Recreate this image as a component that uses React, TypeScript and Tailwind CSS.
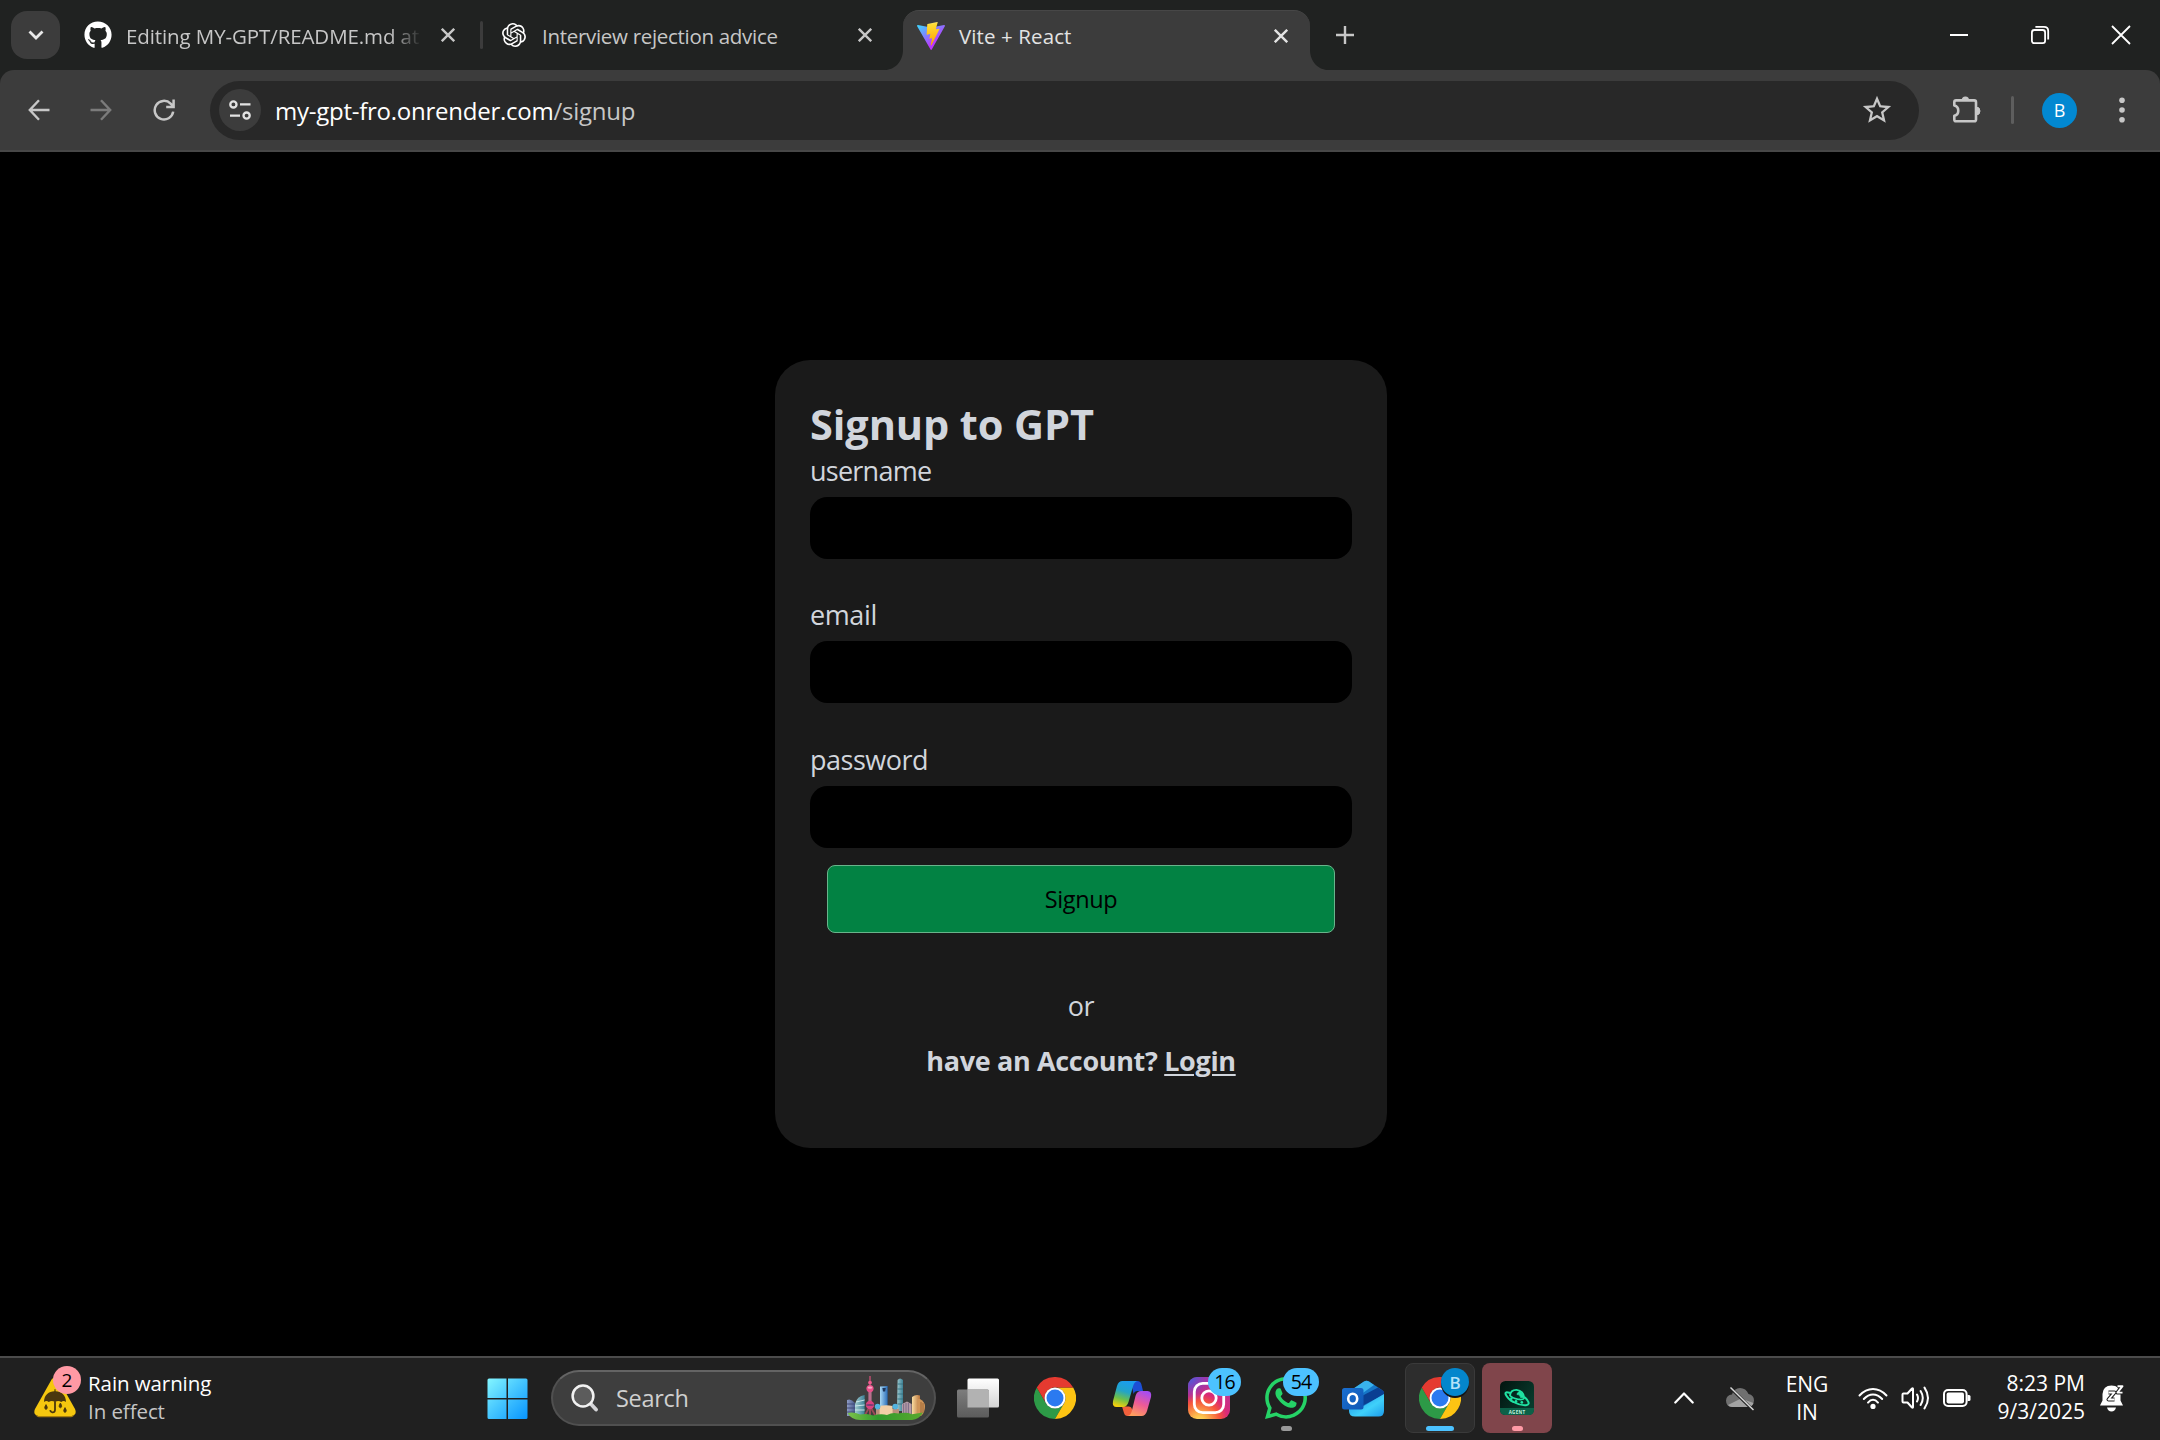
import type { ReactNode } from "react";
import { FaGithub, FaWhatsapp } from "react-icons/fa";
import { SiOpenai } from "react-icons/si";
import { MdStarBorder } from "react-icons/md";

/* ---------- shared glyphs ---------- */

function Close({ className }: { className: string }) {
  return (
    <svg width="14" height="14" viewBox="0 0 14 14" className={className} fill="none" stroke="currentColor" strokeWidth="2.4">
      <path d="M0.8 0.8 L13.2 13.2 M13.2 0.8 L0.8 13.2" />
    </svg>
  );
}

function ViteLogo() {
  return (
    <svg width="28" height="28" viewBox="0 0 256 257" className="shrink-0">
      <defs>
        <linearGradient id="viteA" x1="-.828%" x2="57.636%" y1="7.652%" y2="78.411%">
          <stop offset="0%" stopColor="#41D1FF" />
          <stop offset="100%" stopColor="#BD34FE" />
        </linearGradient>
        <linearGradient id="viteB" x1="43.376%" x2="50.316%" y1="2.242%" y2="89.03%">
          <stop offset="0%" stopColor="#FFEA83" />
          <stop offset="8.333%" stopColor="#FFDD35" />
          <stop offset="100%" stopColor="#FFA800" />
        </linearGradient>
      </defs>
      <path fill="url(#viteA)" d="M255.153 37.938L134.897 252.976c-2.483 4.44-8.862 4.466-11.382.048L.875 37.958c-2.746-4.814 1.371-10.646 6.827-9.67l120.385 21.517a6.537 6.537 0 0 0 2.322-.004l117.867-21.483c5.438-.991 9.574 4.796 6.877 9.62Z" />
      <path fill="url(#viteB)" d="M185.432.063L96.44 17.501a3.268 3.268 0 0 0-2.634 3.014l-5.474 92.456a3.268 3.268 0 0 0 3.997 3.378l24.777-5.718c2.318-.535 4.413 1.507 3.936 3.838l-7.361 36.047c-.495 2.426 1.782 4.5 4.151 3.78l15.304-4.649c2.372-.72 4.652 1.36 4.15 3.788l-11.698 56.621c-.732 3.542 3.979 5.473 5.943 2.437l1.313-2.028l72.516-144.72c1.215-2.423-.88-5.186-3.54-4.672l-25.505 4.922c-2.396.462-4.435-1.77-3.759-4.114l16.646-57.705c.677-2.35-1.37-4.583-3.769-4.113Z" />
    </svg>
  );
}

function ChromeLogo() {
  return (
    <svg width="42" height="42" viewBox="0 0 48 48">
      <path fill="#2d9a47" d="M3.21 12A24 24 0 0 0 24 48L34.39 30A12 12 0 0 1 13.61 30Z" />
      <path fill="#fdc413" d="M24 48A24 24 0 0 0 44.79 12L24 12A12 12 0 0 1 34.39 30Z" />
      <path fill="#e53a30" d="M44.79 12A24 24 0 0 0 3.21 12L13.61 30A12 12 0 0 1 24 12Z" />
      <circle cx="24" cy="24" r="12" fill="#fff" />
      <circle cx="24" cy="24" r="9.7" fill="#2b7af0" />
    </svg>
  );
}

/* ---------- browser chrome ---------- */

function TabFlare({ side }: { side: "left" | "right" }) {
  return (
    <svg
      width="18"
      height="20"
      viewBox="0 0 18 20"
      className={side === "left" ? "absolute bottom-0 -left-[18px]" : "absolute bottom-0 -right-[18px] -scale-x-100"}
    >
      <path d="M18 0V20H0C10 20 18 11 18 0Z" fill="#3c3c3c" />
    </svg>
  );
}

function TabStrip() {
  return (
    <div className="flex h-[70px] items-center bg-[#202221] pl-[11px] text-[20.5px] leading-[28px] text-[#c7c7c7]">
      <div className="flex h-[48px] w-[49px] items-center justify-center rounded-[16px] bg-[#3c3c3c]">
        <svg width="16" height="10" viewBox="0 0 16 10" fill="none" stroke="#e8e8e8" strokeWidth="2.8">
          <path d="M1.5 1.5 L8 8 L14.5 1.5" />
        </svg>
      </div>

      <div className="ml-[6px] flex w-[414px] items-center pl-[18px]">
        <FaGithub className="h-[28px] w-[28px] shrink-0 text-white" />
        <span className="ml-[14px] w-[293px] whitespace-nowrap pt-[1px] tracking-[-0.1px] [mask-image:linear-gradient(to_right,black_90%,transparent_101%)]">
          Editing MY-GPT/README.md at
        </span>
        <Close className="ml-[22px] shrink-0" />
      </div>

      <div className="h-[28px] w-[3px] rounded-full bg-[#3c3c3c]" />

      <div className="flex w-[420px] items-center pl-[19px]">
        <SiOpenai className="h-[24px] w-[24px] shrink-0 text-white" />
        <span className="ml-[16px] w-[301px] whitespace-nowrap pt-[1px] tracking-[-0.3px]">Interview rejection advice</span>
        <Close className="ml-[15px] shrink-0" />
      </div>

      <div className="relative flex h-[60px] w-[407px] items-center self-end rounded-t-[16px] border-t border-[#474747] bg-[#3c3c3c] pb-[10px] pl-[14px] text-[#e3e3e3]">
        <TabFlare side="left" />
        <ViteLogo />
        <span className="ml-[14px] w-[301px] whitespace-nowrap pt-[1px] tracking-[0.1px]">Vite + React</span>
        <Close className="ml-[14px] shrink-0" />
        <TabFlare side="right" />
      </div>

      <svg width="18" height="18" viewBox="0 0 18 18" className="ml-[26px]" stroke="#c7c7c7" strokeWidth="2.4">
        <path d="M9 0V18M0 9H18" />
      </svg>

      <div className="ml-auto flex items-center gap-[61px] pr-[29px] text-white">
        <svg width="20" height="20" viewBox="0 0 20 20" stroke="currentColor" strokeWidth="2">
          <path d="M1 10H19" />
        </svg>
        <svg width="20" height="20" viewBox="0 0 20 20" fill="none" stroke="currentColor" strokeWidth="1.8">
          <rect x="1.9" y="5" width="13.2" height="13.2" rx="2.4" />
          <path d="M5.4 1.9H14Q18.2 1.9 18.2 6V14.4" />
        </svg>
        <svg width="20" height="20" viewBox="0 0 20 20" stroke="currentColor" strokeWidth="1.8">
          <path d="M1 1L19 19M19 1L1 19" />
        </svg>
      </div>
    </div>
  );
}

function Toolbar() {
  return (
    <div className="bg-[#202221]">
      <div className="flex h-[82px] items-center rounded-t-[14px] border-b-2 border-[#474747] bg-[#3c3c3c] pl-[28px] text-[#c7c7c7]">
        <svg width="22" height="22" viewBox="0 0 22 22" fill="none" stroke="currentColor" strokeWidth="2.4">
          <path d="M21.5 11H2M11 1.2L1.8 11L11 20.8" />
        </svg>
        <svg width="22" height="22" viewBox="0 0 22 22" className="ml-[40px] text-[#7b7b7b]" fill="none" stroke="currentColor" strokeWidth="2.4">
          <path d="M0.5 11H20M11 1.2L20.2 11L11 20.8" />
        </svg>
        <svg width="22" height="22" viewBox="0 0 22 22" className="ml-[41px]" fill="none" stroke="currentColor" strokeWidth="2.5">
          <path d="M20.2 12.6A9.3 9.3 0 1 1 17.6 4.6L20.4 7.4M20.6 0.6V8H13.2" />
        </svg>

        <div className="ml-[35px] flex h-[59px] w-[1709px] items-center rounded-full bg-[#282828] pl-[9px]">
          <div className="flex h-[42px] w-[42px] items-center justify-center rounded-full bg-[#3c3c3c]">
            <svg width="22" height="20" viewBox="0 0 22 20" fill="none" stroke="#e3e3e3" strokeWidth="2.3">
              <circle cx="4.4" cy="4.4" r="3.1" />
              <path d="M11 4.4H21.5M1 15.6H11" />
              <circle cx="17.6" cy="15.6" r="3.1" />
            </svg>
          </div>
          <span className="ml-[14px] whitespace-nowrap pt-[2px] text-[24px] leading-[34px] tracking-[-0.25px] text-white">
            my-gpt-fro.onrender.com<span className="text-[#c7c7c7]">/signup</span>
          </span>
          <MdStarBorder className="ml-auto mr-[25px] h-[34px] w-[34px]" />
        </div>

        <svg width="32" height="32" viewBox="0 0 32 32" className="ml-[31px] -mt-[2px]" fill="none" stroke="currentColor" strokeWidth="2.6" strokeLinejoin="round">
          <path d="M6 7.4H24.2Q26 7.4 26 9.2V26.4Q26 28.2 24.2 28.2H6Q4.3 28.2 4.3 26.4V22.8C9.600 21.5 9.600 13.8 4.3 12.6V9.2Q4.3 7.4 6 7.4Z" />
          <path d="M11.800 7A3.6 3.6 0 0 1 19 7Z" fill="currentColor" stroke="none" />
          <path d="M26 14A4 4 0 0 1 26 22Z" fill="currentColor" strokeWidth="1" />
        </svg>
        <div className="ml-[29px] h-[28px] w-[3px] rounded-full bg-[#5e5e5e]" />
        <div className="ml-[28px] flex h-[35px] w-[35px] items-center justify-center rounded-full bg-[#0288d1] text-[18px] leading-none text-white">
          B
        </div>
        <svg width="6" height="26" viewBox="0 0 6 26" className="ml-[42px]" fill="currentColor">
          <circle cx="3" cy="3.2" r="2.8" />
          <circle cx="3" cy="13" r="2.8" />
          <circle cx="3" cy="22.8" r="2.8" />
        </svg>
      </div>
    </div>
  );
}

/* ---------- page ---------- */

function Field({ label, type, tracking }: { label: string; type: string; tracking: string }) {
  return (
    <label className="mb-[35.5px] block">
      <span className={`block text-[27px] leading-[42px] ${tracking}`}>{label}</span>
      <input type={type} className="mt-[5px] block h-[62px] w-full rounded-[17.5px] bg-black px-5 outline-none" />
    </label>
  );
}

function SignupCard() {
  return (
    <div className="h-[788px] w-[612px] rounded-[35px] bg-[#1a1a1a] px-[35px] pt-[35px] text-[#d1d5dc]">
      <h1 className="h-[54.7px] whitespace-nowrap text-[41.5px] font-bold leading-[58px] tracking-[-0.1px]">Signup to GPT</h1>
      <Field label="username" type="text" tracking="tracking-[-0.75px]" />
      <Field label="email" type="email" tracking="tracking-[-0.4px]" />
      <Field label="password" type="password" tracking="tracking-[-0.5px]" />
      <button className="mx-auto -mt-[18px] block h-[68px] w-[508px] rounded-[8px] border border-[#69b48b] bg-[#028243] text-[23.5px] leading-[34px] tracking-[-0.35px] text-black">
        Signup
      </button>
      <p className="mt-[52px] text-center text-[27px] leading-[42px] tracking-[-0.5px]">or</p>
      <p className="mt-[12.500px] text-center text-[27px] font-bold leading-[42px] tracking-[-0.34px]">
        have an Account?{" "}
        <a className="underline decoration-2 underline-offset-[3px]">Login</a>
      </p>
    </div>
  );
}

/* ---------- taskbar ---------- */

function WeatherIcon() {
  return (
    <svg width="42" height="42" viewBox="0 0 42 42">
      <path d="M17.6 3.4Q21 -1.6 24.4 3.4L41 33Q43.4 38.6 37.6 40H4.4Q-1.4 38.6 1 33Z" fill="#f5c70f" />
      <path d="M1 37.8Q2.4 40 4.6 40H37.4Q39.6 40 41 37.8Q39.6 41.2 37 41.2H5Q2.4 41.2 1 37.8Z" fill="#a97f0a" />
      <path d="M10 26C10 18.6 15 15.4 20.4 15.2V13.2H21.6V15.2C27 15.4 32 18.6 32 26Q29.6 24 27.2 26Q24.4 24 21 26Q17.6 24 14.8 26Q12.4 24 10 26Z" fill="#4a370e" />
      <path d="M21 25.4V34Q20.8 36.6 18.2 36.4Q16.4 36.2 16.2 34.2" fill="none" stroke="#4a370e" strokeWidth="1.8" />
      <path d="M12 28.6Q14.6 32.6 12 33.4Q9.4 32.6 12 28.6ZM26.4 27Q29 31 26.4 31.8Q23.8 31 26.4 27ZM31 31.6Q33.6 35.6 31 36.4Q28.4 35.6 31 31.6Z" fill="#4a370e" stroke="#4a370e" strokeWidth="0.8" />
    </svg>
  );
}

function Skyline() {
  return (
    <svg width="80" height="46" viewBox="0 0 80 46">
      <defs>
        <linearGradient id="skyBlue" x1="0" x2="1">
          <stop offset="0" stopColor="#a9d8f4" />
          <stop offset="1" stopColor="#2a6db8" />
        </linearGradient>
        <linearGradient id="skyGold" x1="0" x2="1">
          <stop offset="0" stopColor="#f9dca0" />
          <stop offset="1" stopColor="#b9743c" />
        </linearGradient>
        <linearGradient id="skyGreen" x1="0" x2="1">
          <stop offset="0" stopColor="#7dc24a" />
          <stop offset="0.4" stopColor="#2f9a2c" />
          <stop offset="1" stopColor="#5aa82f" />
        </linearGradient>
        <linearGradient id="skySteel" x1="0" x2="1">
          <stop offset="0" stopColor="#8f9cc4" />
          <stop offset="1" stopColor="#4a5a8e" />
        </linearGradient>
        <linearGradient id="skyTeal" x1="0" x2="1">
          <stop offset="0" stopColor="#9fc9cf" />
          <stop offset="1" stopColor="#3e8296" />
        </linearGradient>
      </defs>
      <path d="M1 25Q5 23 9 28V41H1Z" fill="url(#skySteel)" />
      <path d="M1 29H9M1 33H9M1 37H9" stroke="#3d4673" strokeWidth="0.9" />
      <path d="M9 41V29Q11 21 18.600 20V41Z" fill="url(#skyTeal)" />
      <path d="M10 27L18.600 25M9 31L18.600 30M9 35H18.600" stroke="#d4ecee" strokeWidth="0.9" />
      <path d="M24 1V42" stroke="#c94f74" strokeWidth="1.4" />
      <path d="M22.400 14H25.600V30H22.400Z" fill="#b9708e" />
      <path d="M22.400 34L18.400 41M25.600 34L29.600 41M24 34V41" stroke="#9b4a56" strokeWidth="1.8" />
      <circle cx="24" cy="7.600" r="1.900" fill="#ef5a8f" />
      <circle cx="24" cy="13.600" r="3.600" fill="#e8518a" />
      <ellipse cx="24" cy="12.600" rx="2.400" ry="1.200" fill="#f8a7c4" />
      <circle cx="24" cy="30" r="4.200" fill="#d9417f" />
      <ellipse cx="24" cy="30" rx="4" ry="1" fill="#7b3d75" />
      <path d="M34 11.600L41.600 11V31H34Z" fill="url(#skyBlue)" />
      <path d="M36.400 13H39.800L39.200 16.600H37Z" fill="#1c355c" />
      <path d="M51.600 5Q54 2 57 5V36H51Z" fill="url(#skyTeal)" />
      <path d="M51.400 9H57M51.400 14H57M51.400 19H57M51.400 24H57M51.400 29H57" stroke="#2f6c7c" strokeWidth="0.8" />
      <path d="M30 34H53V41H30Z" fill="#b9907a" />
      <path d="M33.600 31Q40 29.600 46.600 31V41H33.600Z" fill="#f1cfa6" />
      <circle cx="31.600" cy="31.600" r="2.800" fill="#52b3e0" />
      <circle cx="49.200" cy="31.600" r="2.800" fill="#52b3e0" />
      <path d="M56 29L61 26.600L65.600 29V41H56Z" fill="#b59ba6" />
      <path d="M57.600 29V40M60 28V40M62.400 28V40" stroke="#6f5f80" strokeWidth="0.8" />
      <path d="M66 22Q70 19 74 20.600V41H66Z" fill="url(#skyGold)" />
      <path d="M74 24Q79 27 79 31Q79 38 75 41H72V24Z" fill="#cf9558" />
      <path d="M75 27V40M77 28V38" stroke="#8f5a30" strokeWidth="0.8" />
      <path d="M1.600 38Q8 36.600 14 39.600Q22 38 27 40.600Q35 38 41 40Q47 37 52 38.600Q60 36.600 66 39.200L77 37.600Q73 44.600 66 45H14Q5 44.600 1.600 38Z" fill="url(#skyGreen)" />
    </svg>
  );
}

function Cell({ children, className = "" }: { children: ReactNode; className?: string }) {
  return <div className={`relative flex h-[70px] w-[70px] items-center justify-center ${className}`}>{children}</div>;
}

function CountBadge({ value, className }: { value: string; className: string }) {
  return (
    <span className={`absolute top-[5px] flex h-[28px] items-center justify-center rounded-full bg-[#4cc2ff] text-[19.5px] leading-none tracking-[-0.9px] text-black ${className}`}>
      {value}
    </span>
  );
}

function TaskbarApps() {
  return (
    <div className="flex items-center gap-[7px]">
      <Cell>
        <svg width="41" height="41" viewBox="0 0 41 41" className="mr-[2px]">
          <defs>
            <linearGradient id="win" x1="0" y1="0" x2="1" y2="1">
              <stop offset="0" stopColor="#84f6ff" />
              <stop offset="0.5" stopColor="#43c4ff" />
              <stop offset="1" stopColor="#0794ff" />
            </linearGradient>
          </defs>
          <path fill="url(#win)" d="M2 0.500H19.500V20H0.500V2Q0.500 0.500 2 0.500ZM21 0.500H39Q40.500 0.500 40.500 2V20H21ZM0.500 21.500H19.500V41H2Q0.500 41 0.500 39.500ZM21 21.500H40.500V39.500Q40.500 41 39 41H21Z" />
        </svg>
      </Cell>

      <div className="ml-[1px] flex h-[56px] w-[385px] items-center rounded-full border-2 border-[#505050] border-t-[#646464] bg-[#3e3e3e] pl-[18px] pr-[8px]">
        <svg width="28" height="28" viewBox="0 0 28 28" fill="none">
          <path d="M18.500 18.500L25 25.500" stroke="#d5d5d8" strokeWidth="3.800" strokeLinecap="round" />
          <circle cx="12" cy="12" r="10.400" fill="#5c5c5c" stroke="#f2f2f2" strokeWidth="2.500" />
        </svg>
        <span className="ml-[17px] text-[23.5px] leading-[34px] tracking-[-0.3px] text-[#cfcfcf]">Search</span>
        <div className="ml-auto">
          <Skyline />
        </div>
      </div>

      <Cell>
        <svg width="42" height="40" viewBox="0 0 42 40">
          <defs>
            <linearGradient id="tvA" x1="0" y1="0" x2="0" y2="1">
              <stop offset="0" stopColor="#ffffff" />
              <stop offset="1" stopColor="#d4d4d4" />
            </linearGradient>
            <linearGradient id="tvB" x1="0" y1="0" x2="0" y2="1">
              <stop offset="0" stopColor="#7d7d7d" />
              <stop offset="1" stopColor="#5c5c5c" />
            </linearGradient>
          </defs>
          <rect x="10.500" y="0.500" width="31.500" height="29" rx="1.500" fill="url(#tvA)" />
          <rect x="0" y="11.500" width="32" height="28" rx="1.500" fill="url(#tvB)" />
          <path d="M10.500 11.500H30.500Q32 11.500 32 13V29.500H10.500Z" fill="#b2b2b2" />
        </svg>
      </Cell>

      <Cell>
        <ChromeLogo />
      </Cell>

      <Cell>
        <svg width="40" height="37" viewBox="0 0 40 37">
          <defs>
            <linearGradient id="cpA" x1="0.600" y1="0" x2="0.300" y2="1">
              <stop offset="0" stopColor="#1a9df0" />
              <stop offset="0.400" stopColor="#22a4c8" />
              <stop offset="0.700" stopColor="#6cc04a" />
              <stop offset="1" stopColor="#f5cf0c" />
            </linearGradient>
            <linearGradient id="cpB" x1="0.700" y1="0" x2="0.300" y2="1">
              <stop offset="0" stopColor="#a64df2" />
              <stop offset="0.500" stopColor="#ee5a96" />
              <stop offset="1" stopColor="#ffa05c" />
            </linearGradient>
          </defs>
          <path d="M19 1H25.500Q28.300 1 29.300 4L31 11H25.500Q22.500 11 21.500 14Z" fill="#1c4fd6" />
          <path d="M10 26.500H17Q19.500 26.500 20 29L22 36H15.500Q12.800 36 12 33Z" fill="#f2603c" />
          <path d="M10.500 1H25.500Q22.500 1.500 21.300 5.500L16.500 22Q15 27 11 27H4.500Q0 27 1 21L5 6Q6.500 1 10.500 1Z" fill="url(#cpA)" />
          <path d="M29 11H35.500Q40 11 39 17L35 31Q33.500 36 29.500 36H15.500Q18.500 35.500 19.700 31.500L23.500 16Q25 11 29 11Z" fill="url(#cpB)" />
        </svg>
      </Cell>

      <Cell>
        <svg width="42" height="42" viewBox="0 0 42 42">
          <defs>
            <radialGradient id="ig" cx="0.270" cy="1.070" r="1.100">
              <stop offset="0" stopColor="#fedc6e" />
              <stop offset="0.120" stopColor="#fdc94f" />
              <stop offset="0.450" stopColor="#f5543c" />
              <stop offset="0.620" stopColor="#d92a78" />
              <stop offset="1" stopColor="#b0359f" />
            </radialGradient>
            <radialGradient id="igB" cx="0" cy="0" r="0.600">
              <stop offset="0" stopColor="#3c63e0" />
              <stop offset="1" stopColor="#6b3bd8" stopOpacity="0" />
            </radialGradient>
          </defs>
          <rect width="42" height="42" rx="9" fill="url(#ig)" />
          <rect width="42" height="42" rx="9" fill="url(#igB)" />
          <rect x="6.300" y="6.300" width="29.400" height="29.400" rx="8.500" fill="none" stroke="#fff" strokeWidth="2.800" />
          <circle cx="21" cy="21" r="7.200" fill="none" stroke="#fff" strokeWidth="2.800" />
        </svg>
        <CountBadge value="16" className="left-[34px] w-[33px]" />
      </Cell>

      <Cell>
        <FaWhatsapp className="h-[48px] w-[48px] text-[#25d366]" />
        <CountBadge value="54" className="left-[32px] w-[36px]" />
        <span className="absolute bottom-[2px] left-[30px] h-[5px] w-[11px] rounded-full bg-[#9a9a9a]" />
      </Cell>

      <Cell>
        <svg width="42" height="37" viewBox="0 0 42 37">
          <defs>
            <linearGradient id="olA" x1="0" y1="0" x2="1" y2="1">
              <stop offset="0" stopColor="#1b8be0" />
              <stop offset="0.600" stopColor="#3fd0fa" />
              <stop offset="1" stopColor="#1d9bea" />
            </linearGradient>
            <linearGradient id="olB" x1="0" y1="0" x2="1" y2="1">
              <stop offset="0" stopColor="#1a6fd0" />
              <stop offset="1" stopColor="#0f56b4" />
            </linearGradient>
          </defs>
          <path d="M7 12L22 1.500Q24.500 0 27 1.500L40 10Q42 11.500 42 14V30H7Z" fill="#1677c8" />
          <path d="M10 9.500L22 1.500Q24.500 0 27 1.500L32 5L18 15H10Z" fill="#39b2ec" />
          <path d="M18 17L36 7.500L42 11.500V14.500L20 26Z" fill="#0a3f92" />
          <path d="M42 14V31Q42 36.500 36.500 36.500H13Q7 36.500 7 31V27H20Z" fill="url(#olA)" />
          <rect x="0" y="8" width="21.500" height="21.500" rx="2.500" fill="url(#olB)" />
          <ellipse cx="10.700" cy="18.700" rx="4.500" ry="5" fill="none" stroke="#fff" strokeWidth="2.600" />
        </svg>
      </Cell>

      <Cell className="rounded-[8px] border border-[#3a3a3a] bg-[#2d2d2d]">
        <ChromeLogo />
        <span className="absolute left-[35px] top-[6px] h-[28px] w-[28px] rounded-full bg-[#141414]" />
        <span className="absolute left-[35px] top-[4px] flex h-[28px] w-[28px] items-center justify-center rounded-full bg-[#0486cc] text-[17px] font-semibold leading-none text-[#b5e2f8]">
          B
        </span>
        <span className="absolute bottom-[1px] left-[20px] h-[5px] w-[28px] rounded-full bg-[#4cc2ff]" />
      </Cell>

      <Cell className="rounded-[8px] bg-[#80454b]">
        <svg width="34" height="34" viewBox="0 0 34 34">
          <defs>
            <linearGradient id="agent" x1="0" y1="0" x2="1" y2="0.600">
              <stop offset="0" stopColor="#02140f" />
              <stop offset="1" stopColor="#083a2c" />
            </linearGradient>
          </defs>
          <rect width="34" height="34" rx="5.500" fill="url(#agent)" />
          <path d="M0 27H34V28.500Q34 34 28.500 34H5.500Q0 34 0 28.500Z" fill="#0c6148" />
          <g fill="none" stroke="#1fe3a2" strokeLinecap="round" strokeLinejoin="round">
            <path d="M9.500 11.800Q4.800 10.200 5.600 13.200Q8 18.200 13.500 21Q20 24.600 26 24.200Q30 23.600 28 20.200Q27 18.400 25 16.600" strokeWidth="2" />
            <path d="M10 14.500Q10.600 8.800 16.500 8.900Q23.600 10 24.400 17Q23.400 19.400 17.500 18.200Q12 16.800 10 14.500Z" strokeWidth="1.800" />
            <path d="M19.500 10.500Q16.500 12 17 13.500Q20 13 20.500 16.500L23.800 17Q23.500 12.400 19.500 10.500Z" fill="#1fe3a2" strokeWidth="0.700" />
          </g>
          <g fill="#1fe3a2">
            <circle cx="11.400" cy="17.600" r="1.300" />
            <circle cx="16" cy="20.400" r="1.400" />
            <circle cx="21.800" cy="21.400" r="1.400" />
          </g>
        </svg>
        <span className="absolute bottom-[18.5px] left-[18px] w-[34px] text-center text-[4.5px] font-bold leading-[6px] tracking-[0.3px] text-[#c4f0df]">
          AGENT
        </span>
        <span className="absolute bottom-[2px] left-[30px] h-[5px] w-[11px] rounded-full bg-[#ff9aa6]" />
      </Cell>
    </div>
  );
}

function Tray() {
  return (
    <div className="ml-auto flex items-center text-[21px] leading-[28px] text-white">
      <svg width="20" height="12" viewBox="0 0 20 12" fill="none" stroke="currentColor" strokeWidth="2.2" strokeLinecap="round" strokeLinejoin="round">
        <path d="M1.300 10.500L10 1.500L18.700 10.500" />
      </svg>
      <svg width="30" height="26" viewBox="0 0 30 26" className="ml-[31px]">
        <path d="M7 9.500Q9 3 15 3Q21 3 23.500 9Q29 10 29 15.500Q28.500 22 23 22H7Q1 21.500 1 15.500Q1.500 10 7 9.500Z" fill="#707070" />
        <path d="M3 20L16 13.500L28.500 18Q27 22 23 22H7Q4.500 22 3 20Z" fill="#a4a4a4" />
        <path d="M5.500 3L28 25" stroke="#202020" strokeWidth="3" />
        <path d="M5.500 2.500L28.500 25" stroke="#d8d8d8" strokeWidth="1.500" />
      </svg>
      <div className="ml-[30px] w-[44px] text-center">
        <div>ENG</div>
        <div>IN</div>
      </div>
      <svg width="30" height="24" viewBox="0 0 30 24" className="ml-[29px]" fill="none" stroke="currentColor" strokeWidth="2" strokeLinecap="round">
        <path d="M1.500 9.500Q7.500 3 15 3Q22.500 3 28.500 9.500M5.800 13Q10 8.400 15 8.400Q20 8.400 24.200 13M10 16.600Q12.400 13.800 15 13.800Q17.600 13.800 20 16.600" />
        <circle cx="15" cy="20.400" r="2.600" fill="currentColor" stroke="none" />
      </svg>
      <svg width="30" height="26" viewBox="0 0 30 26" className="ml-[13px]" fill="none" stroke="currentColor" strokeWidth="2" strokeLinecap="round" strokeLinejoin="round">
        <path d="M1.500 9.500V16.500Q1.500 17.500 2.500 17.500H6.500L11 22.500Q12 23.200 12 22V4Q12 2.800 11 3.500L6.500 8.500H2.500Q1.500 8.500 1.500 9.500Z" />
        <path d="M16 9.500Q18 13 16 16.500M19.600 6Q24 13 19.600 20M23.500 2.600Q30.500 13 23.500 23.400" />
      </svg>
      <svg width="28" height="18" viewBox="0 0 28 18" className="ml-[12px] mr-[1px]" fill="none" stroke="currentColor" strokeWidth="2">
        <rect x="1" y="1" width="22.600" height="16" rx="4" />
        <rect x="3.600" y="3.600" width="17.400" height="10.800" rx="1.800" fill="currentColor" stroke="none" />
        <path d="M24.500 6H26Q27.500 6 27.500 7.500V10.500Q27.500 12 26 12H24.500Z" fill="currentColor" stroke="none" />
      </svg>
      <div className="ml-[25px] mr-[1px] w-[88px] -translate-y-[1px] text-right">
        <div>8:23 PM</div>
        <div>9/3/2025</div>
      </div>
      <svg width="26" height="30" viewBox="0 0 26 30" className="ml-[13px] mr-[35px]">
        <path d="M3.500 11Q4 2.500 12.500 2.500Q21 2.500 21.500 11V17.500L24 22.500H1L3.500 17.500Z" fill="#fff" />
        <path d="M8 24.500H17Q16 28.500 12.500 28.500Q9 28.500 8 24.500Z" fill="#fff" />
        <g fill="none" strokeLinejoin="round">
          <path d="M9.500 9.500H15.500L9.500 16.500H15.500" stroke="#202020" strokeWidth="4" />
          <path d="M18.500 3.200H23.500L18.500 9.600H23.500" stroke="#202020" strokeWidth="4" />
          <path d="M9.500 9.500H15.500L9.500 16.500H15.500M18.500 3.200H23.500L18.500 9.600H23.500" stroke="#fff" strokeWidth="1.900" />
        </g>
      </svg>
    </div>
  );
}

function Taskbar() {
  return (
    <div className="flex h-[84px] items-start border-t-2 border-[#4b4b4b] bg-[#202020] pt-[5px]">
      <div className="flex h-[70px] w-[473px] items-center pl-[34px]">
        <div className="relative pb-[2px]">
          <WeatherIcon />
          <span className="absolute -top-[10px] left-[19px] flex h-[28px] w-[28px] items-center justify-center rounded-full bg-[#ff99a4] text-[19px] leading-none text-black">
            2
          </span>
        </div>
        <div className="ml-[12px] whitespace-nowrap pb-[2px] text-[20.5px] leading-[28px] tracking-[-0.08px]">
          <div className="text-white">Rain warning</div>
          <div className="text-[#c5c5c5]">In effect</div>
        </div>
      </div>
      <TaskbarApps />
      <div className="ml-auto flex h-[70px] items-center">
        <Tray />
      </div>
    </div>
  );
}

export default function App() {
  return (
    <div className="flex h-[1440px] w-[2160px] flex-col overflow-hidden bg-black font-['Open_Sans',sans-serif]">
      <TabStrip />
      <Toolbar />
      <main className="flex flex-1 justify-center pl-[2px] pt-[208px]">
        <SignupCard />
      </main>
      <Taskbar />
    </div>
  );
}
